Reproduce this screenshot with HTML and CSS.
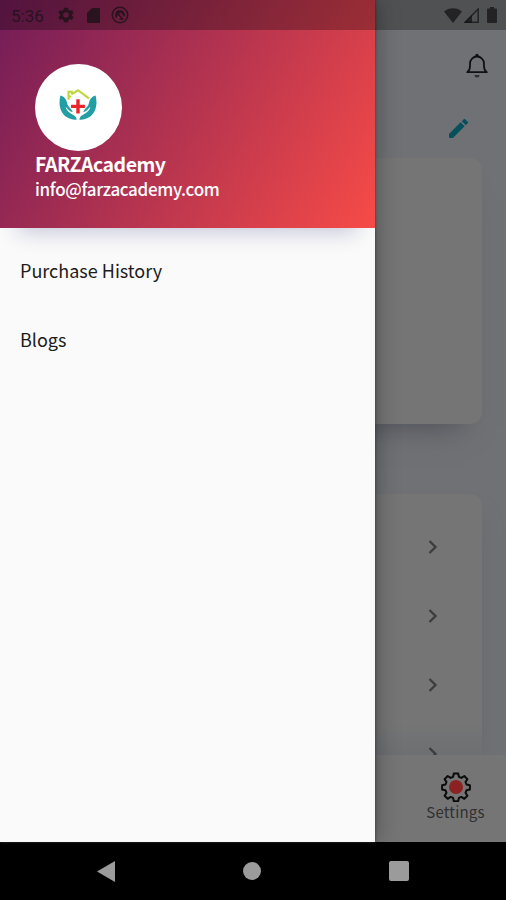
FILE: index.html
```html
<!DOCTYPE html>
<html lang="en">
<head>
<meta charset="utf-8">
<title>FARZAcademy</title>
<link rel="stylesheet" href="styles.css">
</head>
<body>
<div class="phone">
  <div class="page">
    <header class="appbar">
      <svg class="bell" viewBox="0 0 24 26" fill="none" stroke="#101112" stroke-width="1.8" stroke-linejoin="round">
        <path d="M2.200 19.200h19.600c-2-1.200-2.800-3-2.800-6V10.500a7 7 0 0 0-14 0v2.700c0 3-.8 4.800-2.800 6z"/>
        <circle cx="12" cy="2.400" r="1.700" fill="#101112" stroke="none"/>
        <path d="M9.500 22h5a2.500 2.500 0 0 1-5 0z" fill="#303132" stroke="none"/>
      </svg>
    </header>
    <div class="edit-row">
      <svg class="pencil" viewBox="3 3 18 18" fill="#04505b"><path d="M3 17.250V20q0 1 1 1h2.750L17.810 9.940l-3.750-3.750zM20.710 7.040a1 1 0 0 0 0-1.410l-2.340-2.340a1 1 0 0 0-1.410 0l-1.830 1.830 3.750 3.750z"/></svg>
    </div>
    <section class="card profile"></section>
    <section class="card options">
      <div class="option"><svg class="chevron" viewBox="0 0 10 16"><path d="M1.500 2l6 6-6 6"/></svg></div>
      <div class="option"><svg class="chevron" viewBox="0 0 10 16"><path d="M1.500 2l6 6-6 6"/></svg></div>
      <div class="option"><svg class="chevron" viewBox="0 0 10 16"><path d="M1.500 2l6 6-6 6"/></svg></div>
      <div class="option"><svg class="chevron" viewBox="0 0 10 16"><path d="M1.500 2l6 6-6 6"/></svg></div>
    </section>
    <nav class="tabs">
      <div class="tab">
        <svg class="gear" viewBox="0 0 30 30">
          <path d="M12.800 1.500h4.400l.7 3.400 2.500 1 2.900-1.900 3.100 3.100-1.900 2.900 1 2.500 3.400.7v4.400l-3.400.7-1 2.500 1.900 2.900-3.100 3.100-2.900-1.900-2.500 1-.7 3.400h-4.400l-.7-3.400-2.500-1-2.900 1.900-3.100-3.100 1.900-2.900-1-2.500-3.400-.7v-4.400l3.400-.7 1-2.500-1.900-2.900 3.100-3.100 2.900 1.900 2.500-1z" fill="none" stroke="#0b0b0b" stroke-width="2" stroke-linejoin="round"/>
          <circle cx="15" cy="15" r="7" fill="#8d2223"/>
        </svg>
        <span class="tab-label">Settings</span>
      </div>
    </nav>
  </div>

  <aside class="drawer">
    <div class="account">
      <div class="avatar">
        <svg class="logo" viewBox="0 0 40 34">
          <path d="M10 12V3.500h3.500v3M10 8.500h3M13.500 6L20 2l11.500 8.500" fill="none" stroke="#bdd63c" stroke-width="2.200"/>
          <path d="M20 11.500v15M12.700 19h14.600" stroke="#e9252b" stroke-width="3.600"/>
          <g id="hand" fill="#229ea5">
            <path d="M1.500 7.500c4 1 6.500 4 7 8 .5 4 4.500 5.500 6 9.500-4-1-5.500-4-7.500-5.500 1 4.500 5 6.500 9 9 2 1.300 2.500 3 2.500 4.500-3 .5-7-.5-10-2.500C1.500 26-1 17.500 1.500 7.500z"/>
          </g>
          <use href="#hand" transform="translate(40 0) scale(-1 1)"/>
        </svg>
      </div>
      <div class="name">FARZAcademy</div>
      <div class="email">info@farzacademy.com</div>
    </div>
    <div class="menu">
      <div class="menu-item">Purchase History</div>
      <div class="menu-item">Blogs</div>
    </div>
  </aside>

  <div class="status">
    <span class="time">5:36</span>
    <svg class="s-gear" viewBox="2 2 20 20"><path fill-rule="evenodd" d="M19.400 13a7 7 0 0 0 0-2l2.100-1.600-2-3.500-2.500 1a8 8 0 0 0-1.700-1L14.500 3h-5l-.8 2.900a8 8 0 0 0-1.700 1l-2.500-1-2 3.500L4.600 11a7 7 0 0 0 0 2l-2.100 1.600 2 3.500 2.500-1a8 8 0 0 0 1.700 1l.8 2.900h5l.8-2.900a8 8 0 0 0 1.700-1l2.500 1 2-3.500zM12 15.500a3.500 3.500 0 1 1 0-7 3.500 3.500 0 0 1 0 7z"/></svg>
    <svg class="s-card" viewBox="0 0 13 15"><path d="M5 0h7q1 0 1 1v13q0 1-1 1H1q-1 0-1-1V5z"/></svg>
    <svg class="s-app" viewBox="0 0 18 18"><circle cx="9" cy="9" r="7.700" fill="none" stroke="currentColor" stroke-width="1.600"/><path d="M5.500 12.500A5 5 0 0 1 9 4a5 5 0 0 1 4.500 7L9.500 6.500 8 8l5 5a5 5 0 0 1-5 .5L10 12 6.500 9z"/></svg>
    <span class="spacer"></span>
    <svg class="s-wifi" viewBox="0 0 18 15"><path d="M0 3.500C5-1 13-1 18 3.500L9 15z"/></svg>
    <svg class="s-signal" viewBox="0 0 15 15"><path d="M14.200 1v13.200H1z" fill="none" stroke="currentColor" stroke-width="1.500"/><path d="M8 7v8H0z"/></svg>
    <svg class="s-battery" viewBox="0 0 10 16"><path d="M3 0h4v1.500h2q1 0 1 1V15q0 1-1 1H1q-1 0-1-1V2.500q0-1 1-1h2z"/></svg>
  </div>

  <footer class="navbar">
    <svg class="back" viewBox="0 0 18 21"><path d="M18 0v21L0 10.500z"/></svg>
    <span class="home"></span>
    <span class="recent"></span>
  </footer>
</div>
</body>
</html>
```
FILE: styles.css
```css
* { box-sizing: border-box; }
body {
  margin: 0;
  font-family: "Noto Sans CJK SC", "Noto Sans", sans-serif;
}
svg { display: block; flex: none; }
.phone {
  position: relative;
  display: flex;
  flex-direction: column;
  width: 506px;
  height: 900px;
  overflow: hidden;
  background: #000;
}

/* Page behind the drawer, in its dimmed state */
.page {
  display: flex;
  flex-direction: column;
  height: 842px;
  padding-top: 30px;
  overflow: hidden;
  background: #707174;
}
.appbar {
  display: flex;
  flex: none;
  justify-content: flex-end;
  height: 70px;
  padding: 23px 17px 0 0;
}
.bell { width: 24px; height: 26px; }
.edit-row {
  display: flex;
  flex: none;
  justify-content: flex-end;
  height: 58px;
  padding: 19px 38px 0 0;
}
.pencil { width: 19px; height: 19px; }
.card {
  flex: none;
  margin: 0 24px;
  border-radius: 12px;
  background: #757575;
}
.profile {
  height: 266px;
  box-shadow: 0 22px 28px -20px #4b4e58;
}
.options {
  height: 261px;
  margin-top: 70px;
  padding-top: 18px;
  border-radius: 12px 12px 0 0;
  background: linear-gradient(#757575 88%, #6d6f72);
  box-shadow: 0 20px 24px -6px #64676b;
  overflow: hidden;
}
.option {
  display: flex;
  align-items: center;
  justify-content: flex-end;
  height: 69px;
  padding-right: 44px;
}
.chevron { width: 10px; height: 16px; }
.chevron path { fill: none; stroke: #3c3c3c; stroke-width: 2.3; }
.tabs {
  position: relative;
  display: flex;
  flex: none;
  justify-content: flex-end;
  height: 87px;
  background: #757575;
}
.tab {
  display: flex;
  flex-direction: column;
  align-items: center;
  width: 101px;
  padding-top: 17px;
}
.gear { width: 30px; height: 30px; }
.tab-label {
  font-size: 15px;
  line-height: 19px;
  letter-spacing: .2px;
  color: #303030;
}

/* Drawer */
.drawer {
  position: absolute;
  left: 0;
  top: 0;
  width: 375px;
  height: 842px;
  background: #fafafa;
  box-shadow: 0 0 3px #333, 4px 0 20px rgba(0, 0, 0, .25);
}
.account {
  height: 228px;
  padding: 64px 35px 0;
  background: linear-gradient(121deg, #721c58, #f74b47);
  box-shadow: 0 22px 20px -18px #c4c5d8;
  color: #fff;
}
.avatar {
  display: flex;
  align-items: center;
  justify-content: center;
  width: 87px;
  height: 87px;
  padding: 0 2px 6px 0;
  border-radius: 50%;
  background: #fff;
}
.logo { width: 38px; height: 33px; }
.name {
  margin-top: 1px;
  font-size: 19.500px;
  font-weight: 700;
  line-height: 24px;
  letter-spacing: -.5px;
}
.email {
  font-size: 17px;
  font-weight: 500;
  line-height: 26px;
  letter-spacing: -.32px;
}
.menu { padding: 9px 20px; }
.menu-item {
  height: 69px;
  font-size: 18px;
  line-height: 67px;
  color: #1c1c1c;
}

/* System bars */
.status {
  position: absolute;
  left: 0;
  top: 0;
  display: flex;
  align-items: center;
  width: 506px;
  height: 30px;
  padding: 0 9px 0 11px;
  background: rgba(0, 0, 0, .28);
  color: rgba(18, 16, 20, .72);
}
.status svg { fill: currentColor; }
.time {
  width: 47px;
  padding-top: 2px;
  font-family: Roboto, sans-serif;
  font-size: 17px;
  line-height: 30px;
}
.s-gear { width: 16px; height: 16px; }
.s-card { width: 13px; height: 15px; margin-left: 13px; }
.s-app { width: 18px; height: 18px; margin-left: 11px; }
.spacer { flex: 1; }
.s-wifi { width: 18px; height: 15px; }
.s-signal { width: 15px; height: 15px; margin-left: 2px; }
.s-battery { width: 10px; height: 16px; margin-left: 8px; }
.navbar {
  display: flex;
  align-items: center;
  justify-content: space-between;
  height: 58px;
  padding: 0 97px;
  background: #000;
}
.back { width: 18px; height: 21px; fill: #9b9b9b; }
.home { width: 18px; height: 18px; border-radius: 50%; background: #9b9b9b; }
.recent { width: 20px; height: 20px; border-radius: 2px; background: #9b9b9b; }
```
